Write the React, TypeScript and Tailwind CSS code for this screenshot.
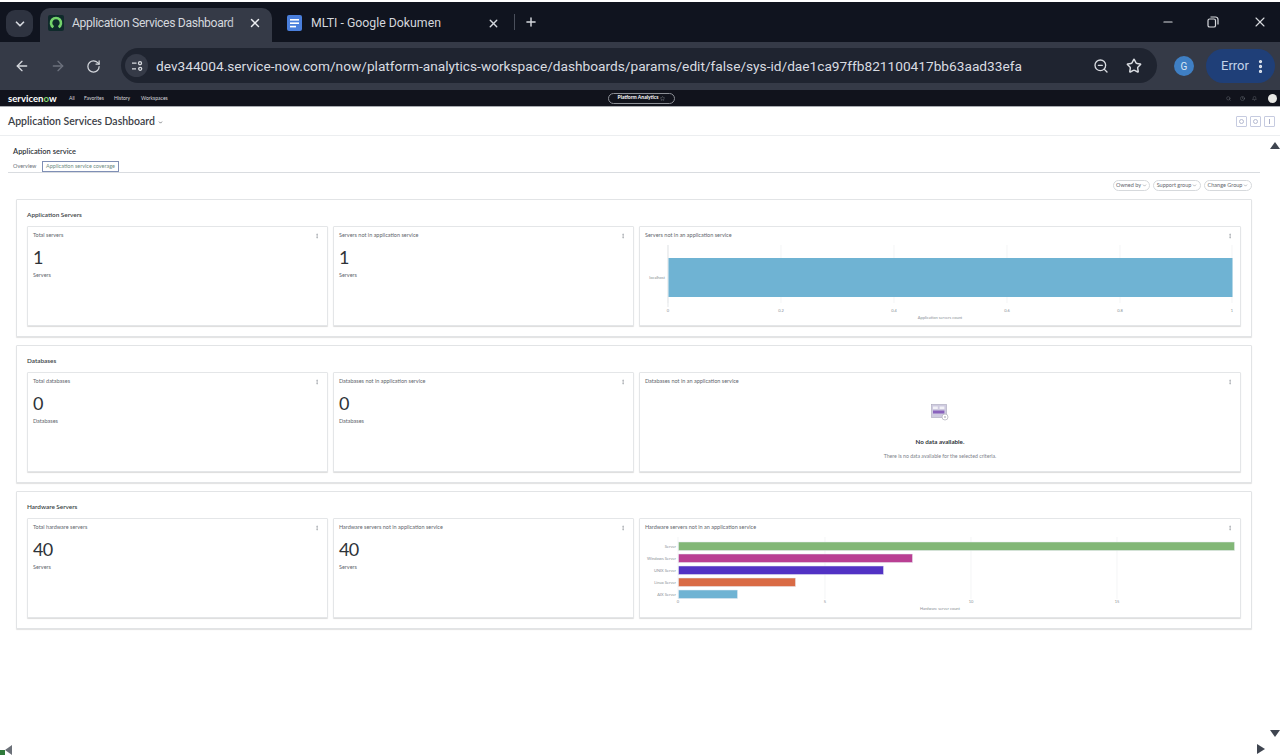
import React from 'react'
import { ArrowLeft, ArrowRight, ChevronDown, EllipsisVertical, Minus, Plus, RotateCw, Star, X, ZoomOut, Bell, Clock, Search } from 'lucide-react'

const SectionCard: React.FC<{ title: string; value?: string; unit?: string; children?: React.ReactNode }> = ({ title, value, unit, children }) => (
  <div className="h-[100px] flex flex-col bg-white border border-[#e4e6e8] rounded-[1px] shadow-[0_1px_1px_rgba(0,0,0,0.14)]">
    <div className="h-[17px] shrink-0 pl-[5px] pr-[7px] flex items-center justify-between text-[5.5px] text-[#5f666d]">
      <span>{title}</span>
      <EllipsisVertical className="w-[6px] h-[6px] text-[#7b8188]" />
    </div>
    {value ? (
      <div className="pt-[1px] pl-[5px] text-[#2e3338]">
        <div className="text-[18px] leading-[24px] tracking-[-0.8px]">{value}</div>
        <div className="mt-[2px] text-[5.5px] leading-[8px] text-[#5f666d]">{unit}</div>
      </div>
    ) : children}
  </div>
)

const AppServersChart = () => (
  <svg viewBox="0 0 600 80" className="w-[600px] h-[80px] block mt-[1px]" fontFamily="Lato, sans-serif">
    {[28, 141, 254, 367, 480, 592].map((x) => (
      <line key={x} x1={x} x2={x} y1={0} y2={58} stroke="#eceef0" strokeWidth="0.6" />
    ))}
    <line x1={28} x2={28} y1={0} y2={62} stroke="#d5d8db" strokeWidth="0.6" />
    <rect x={28.5} y={13} width={564} height={39} fill="#6fb3d3" />
    <text x={25} y={34} fontSize="4" textAnchor="end" fill="#8a9096">localhost</text>
    {['0', '0.2', '0.4', '0.6', '0.8', '1'].map((t, i) => (
      <text key={t} x={[28, 141, 254, 367, 480, 592][i]} y={66.5} fontSize="4" textAnchor="middle" fill="#8a9096">{t}</text>
    ))}
    <text x={300} y={73.5} fontSize="4" textAnchor="middle" fill="#8a9096">Application servers count</text>
  </svg>
)

const hardwareBars = [
  { label: 'Server', w: 556, color: '#82b777' },
  { label: 'Windows Server', w: 234, color: '#b93f93' },
  { label: 'UNIX Server', w: 205, color: '#5232c4' },
  { label: 'Linux Server', w: 117, color: '#d96b45' },
  { label: 'AIX Server', w: 59, color: '#6fb3d3' },
]

const HardwareChart = () => (
  <svg viewBox="0 0 600 80" className="w-[600px] h-[80px] block mt-[1px]" fontFamily="Lato, sans-serif">
    {[38, 185, 331, 477].map((x) => (
      <line key={x} x1={x} x2={x} y1={0} y2={62} stroke="#eceef0" strokeWidth="0.6" />
    ))}
    {hardwareBars.map((b, i) => (
      <g key={b.label}>
        <rect x={38.5} y={5 + i * 12} width={b.w} height={8.5} fill={b.color} stroke="#e6e9f2" strokeWidth="0.5" />
        <text x={36} y={10.5 + i * 12} fontSize="4" textAnchor="end" fill="#8a9096">{b.label}</text>
      </g>
    ))}
    {['0', '5', '10', '15'].map((t, i) => (
      <text key={t} x={[38, 185, 331, 477][i]} y={66.3} fontSize="4" textAnchor="middle" fill="#8a9096">{t}</text>
    ))}
    <text x={300} y={73.3} fontSize="4" textAnchor="middle" fill="#8a9096">Hardware server count</text>
  </svg>
)

const NoData = () => (
  <div className="flex flex-col items-center pt-[14px]">
    <svg viewBox="0 0 18 17" className="w-[18px] h-[17px] block">
      <rect x="0.5" y="0.5" width="15" height="13" fill="#cfcbe0" stroke="#a9a6bb" strokeWidth="0.6" />
      <rect x="2" y="2.5" width="4.8" height="2.5" fill="#f2f1f7" />
      <rect x="8.6" y="2.5" width="4.8" height="2.5" fill="#f2f1f7" />
      <rect x="2" y="6.5" width="11.4" height="3" fill="#8a63bd" />
      <circle cx="14" cy="13" r="3" fill="#fff" stroke="#b6b6c0" strokeWidth="0.8" />
      <circle cx="14" cy="13" r="0.9" fill="#b6b6c0" />
    </svg>
    <div className="mt-[17px] text-[6.2px] leading-[8px] font-bold text-[#2e3338]">No data available.</div>
    <div className="mt-[6px] text-[5.2px] leading-[8px] text-[#7b8188]">There is no data available for the selected criteria.</div>
  </div>
)

const Section: React.FC<{ title: string; children: React.ReactNode }> = ({ title, children }) => (
  <div className="h-[138px] flex flex-col bg-white border border-[#e2e4e6] rounded-[1px] shadow-[0_1px_1px_rgba(0,0,0,0.12)] px-[10px]">
    <div className="h-[26px] shrink-0 pt-[4px] flex items-center text-[6.4px] font-semibold text-[#3a3f45]">{title}</div>
    <div className="grid grid-cols-[301px_301px_602px] gap-[5px]">{children}</div>
  </div>
)

const FilterPill: React.FC<{ label: string; width: string }> = ({ label, width }) => (
  <div className={`${width} h-[11px] flex items-center justify-center gap-[1px] rounded-full border border-[#d6d9dc] text-[5.5px] text-[#5f666d]`}>
    {label}
    <ChevronDown className="w-[5px] h-[5px]" />
  </div>
)

export default function App() {
  return (
    <div className="relative w-[1280px] h-[755px] overflow-hidden flex flex-col bg-white antialiased font-['Lato',sans-serif]">
      <div className="h-[2px] shrink-0 bg-white" />

      {/* Tab strip */}
      <div className="h-[40px] shrink-0 bg-[#10141f] flex items-end font-['Roboto',sans-serif] text-[#d4d7dd]">
        <div className="ml-[6px] mb-[5px] w-[27px] h-[27px] rounded-[9px] bg-[#2e3340] flex items-center justify-center">
          <ChevronDown className="w-[14px] h-[14px]" strokeWidth={3} />
        </div>
        <div className="ml-[7px] w-[232px] h-[34px] rounded-t-[10px] bg-[#353a47] flex items-center pl-[8px] pr-[10px] pb-[4px]">
          <svg viewBox="0 0 16 16" className="w-[16px] h-[16px] block shrink-0">
            <rect width="16" height="16" rx="2" fill="#0f2a2b" />
            <path d="M5.4 12.2a5 5 0 1 1 5.2 0" fill="none" stroke="#74d36b" strokeWidth="2.6" />
          </svg>
          <div className="relative ml-[8px] w-[172px]">
            <span className="block whitespace-nowrap text-[12.2px] leading-[18px] tracking-[-0.35px]">Application Services Dashboard</span>
            <div className="absolute right-0 top-0 w-[14px] h-full bg-gradient-to-r from-transparent to-[#353a47]" />
          </div>
          <X className="ml-auto w-[14px] h-[14px] text-[#eceef2]" strokeWidth={2.5} />
        </div>
        <div className="w-[236px] h-[34px] flex items-center pl-[15px] pb-[4px]">
          <svg viewBox="0 0 15 16" className="w-[15px] h-[16px] block shrink-0">
            <rect width="15" height="16" rx="2" fill="#4a7fdc" />
            <rect x="3" y="4" width="9" height="1.6" fill="#fff" />
            <rect x="3" y="7.4" width="9" height="1.6" fill="#fff" />
            <rect x="3" y="10.8" width="6" height="1.6" fill="#fff" />
          </svg>
          <span className="ml-[9px] w-[176px] whitespace-nowrap text-[12.3px] leading-[18px]">MLTI - Google Dokumen</span>
          <X className="w-[13px] h-[13px]" strokeWidth={2.5} />
        </div>
        <div className="self-center ml-[6px] w-px h-[16px] bg-[#4a4f5b]" />
        <Plus className="self-center ml-[9px] w-[14px] h-[14px]" strokeWidth={2.5} />
        <div className="flex-1" />
        <div className="self-center flex items-center text-[#d8dade]">
          <Minus className="w-[14px] h-[14px]" strokeWidth={2} />
          <svg viewBox="0 0 12 12" className="ml-[32px] w-[12px] h-[12px] block" fill="none" stroke="currentColor" strokeWidth="1.2">
            <rect x="1" y="3" width="7.5" height="8" rx="1.6" />
            <path d="M3.5 1h5a2.5 2.5 0 0 1 2.5 2.5v5" />
          </svg>
          <X className="ml-[33px] mr-[12px] w-[16px] h-[16px]" strokeWidth={1.6} />
        </div>
      </div>

      {/* Toolbar */}
      <div className="h-[48px] shrink-0 bg-[#353a47] flex items-center font-['Roboto',sans-serif]">
        <ArrowLeft className="ml-[14px] w-[16px] h-[16px] text-[#d4d7dd]" />
        <ArrowRight className="ml-[20px] w-[16px] h-[16px] text-[#6c717d]" />
        <RotateCw className="ml-[20px] w-[15px] h-[15px] text-[#d4d7dd]" />
        <div className="ml-[20px] w-[1036px] h-[35px] mt-[-1px] rounded-full bg-[#1f2430] flex items-center pl-[4px] pr-[15px] text-[#d9dce1]">
          <div className="w-[23px] h-[23px] rounded-full bg-[#353a47] flex items-center justify-center shrink-0">
            <svg viewBox="0 0 12 12" className="w-[12px] h-[12px] block" fill="none" stroke="currentColor" strokeWidth="1.3">
              <path d="M1 3.2h4.5M1 8.8h4" />
              <circle cx="9" cy="3.2" r="1.5" />
              <circle cx="9.2" cy="8.8" r="1.5" />
            </svg>
          </div>
          <span className="ml-[8px] pt-[1px] whitespace-nowrap text-[13.7px]">dev344004.service-now.com/now/platform-analytics-workspace/dashboards/params/edit/false/sys-id/dae1ca97ffb821100417bb63aad33efa</span>
          <ZoomOut className="ml-auto w-[16px] h-[16px] shrink-0" />
          <Star className="ml-[17px] w-[16px] h-[16px] shrink-0" strokeWidth={2.2} />
        </div>
        <div className="ml-[17px] w-[20px] h-[20px] rounded-full bg-[#3f7fc4] flex items-center justify-center text-[10px] text-[#dbe7f5]">G</div>
        <div className="ml-[12px] w-[69px] h-[34px] rounded-full bg-[#1f3f78] flex items-center pl-[15px] text-[13px] text-[#c3d3ea]">
          Error
          <EllipsisVertical className="ml-[3px] w-[17px] h-[17px] text-[#e3e8f0]" strokeWidth={2.6} />
        </div>
      </div>

      {/* ServiceNow nav */}
      <div className="h-[16px] shrink-0 bg-[#11131c] grid grid-cols-[608px_67px_1fr] items-center text-[#d8dade]">
        <div className="flex items-center pl-[8px] pt-[1px] text-[5px]">
          <span className="text-[9.6px] leading-none font-bold text-white w-[61px]">servicen<span className="text-[#7fd36b]">o</span>w</span>
          <span className="w-[15px]">All</span>
          <span className="w-[30px]">Favorites</span>
          <span className="w-[27px]">History</span>
          <span>Workspaces</span>
        </div>
        <div className="h-[11px] rounded-full border border-[#8c8f96] flex items-center justify-center gap-[2px] text-[5px] font-bold text-white">
          Platform Analytics
          <Star className="w-[5px] h-[5px] text-[#9a9da3]" />
        </div>
        <div className="flex items-center justify-end pr-[3px] text-[#70747c]">
          <Search className="w-[5px] h-[5px]" />
          <Clock className="ml-[9px] w-[5px] h-[5px]" />
          <Bell className="ml-[7px] w-[5px] h-[5px]" />
          <div className="ml-[11px] w-[9px] h-[9px] rounded-full bg-[#e8e8e4]" />
        </div>
      </div>
      <div className="h-px shrink-0 bg-[#a8abb0]" />

      {/* Dashboard header */}
      <div className="h-[29px] shrink-0 border-b border-[#eceef0] flex items-center pl-[8px] pr-[5px] pt-[2px]">
        <span className="text-[10.5px] font-semibold text-[#3b4046]">Application Services Dashboard</span>
        <ChevronDown className="ml-[3px] w-[5px] h-[5px] text-[#3b4046]" strokeWidth={3} />
        <div className="ml-auto flex gap-[3px] mt-[-2px]">
          {['a', 'b', 'c'].map((k) => (
            <div key={k} className="w-[11px] h-[11px] border border-[#c6cbe0] rounded-[1px] flex items-center justify-center">
              {k === 'c'
                ? <div className="w-px h-[5px] bg-[#a9aec8]" />
                : <div className="w-[5px] h-[5px] rounded-full border border-[#b4b9d0]" />}
            </div>
          ))}
        </div>
      </div>

      {/* Tabs */}
      <div className="ml-[8px] mr-[20px] shrink-0 border-b border-[#d9dce0]">
        <div className="pl-[5px] pt-[10px] h-[25px] text-[7.5px] leading-[11px] font-semibold text-[#30353a]">Application service</div>
        <div className="flex items-end h-[11px] pl-[5px] text-[5.5px]">
          <span className="w-[29px] text-[#6a7077] self-center">Overview</span>
          <div className="w-[77px] h-[11px] border border-[#7f8fb5] flex items-center justify-center text-[#6f8c83]">Application service coverage</div>
        </div>
      </div>

      {/* Filters */}
      <div className="mt-[7px] pr-[28px] shrink-0 flex justify-end gap-[3px]">
        <FilterPill label="Owned by" width="w-[37px]" />
        <FilterPill label="Support group" width="w-[48px]" />
        <FilterPill label="Change Group" width="w-[48px]" />
      </div>

      {/* Sections */}
      <div className="mt-[8px] ml-[16px] w-[1236px] flex flex-col gap-[8px]">
        <Section title="Application Servers">
          <SectionCard title="Total servers" value="1" unit="Servers" />
          <SectionCard title="Servers not in application service" value="1" unit="Servers" />
          <SectionCard title="Servers not in an application service"><AppServersChart /></SectionCard>
        </Section>
        <Section title="Databases">
          <SectionCard title="Total databases" value="0" unit="Databases" />
          <SectionCard title="Databases not in application service" value="0" unit="Databases" />
          <SectionCard title="Databases not in an application service"><NoData /></SectionCard>
        </Section>
        <Section title="Hardware Servers">
          <SectionCard title="Total hardware servers" value="40" unit="Servers" />
          <SectionCard title="Hardware servers not in application service" value="40" unit="Servers" />
          <SectionCard title="Hardware servers not in an application service"><HardwareChart /></SectionCard>
        </Section>
      </div>

      {/* Scroll arrows */}
      <svg viewBox="0 0 10 7" className="absolute left-[1270px] top-[142px] w-[10px] h-[7px]"><path d="M5 0l5 7H0z" fill="#3f4550" /></svg>
      <svg viewBox="0 0 10 7" className="absolute left-[1270px] top-[730px] w-[10px] h-[7px]"><path d="M0 0h10L5 7z" fill="#3f4550" /></svg>
      <svg viewBox="0 0 7 10" className="absolute left-[5px] top-[745px] w-[7px] h-[10px]"><path d="M7 0v10L0 5z" fill="#6b7078" /></svg>
      <div className="absolute left-0 top-[750px] w-[5px] h-[5px] bg-[#2f7a3a]" />
      <svg viewBox="0 0 8 10" className="absolute left-[1257px] top-[744px] w-[8px] h-[10px]"><path d="M0 0l8 5-8 5z" fill="#3f4550" /></svg>
    </div>
  )
}
